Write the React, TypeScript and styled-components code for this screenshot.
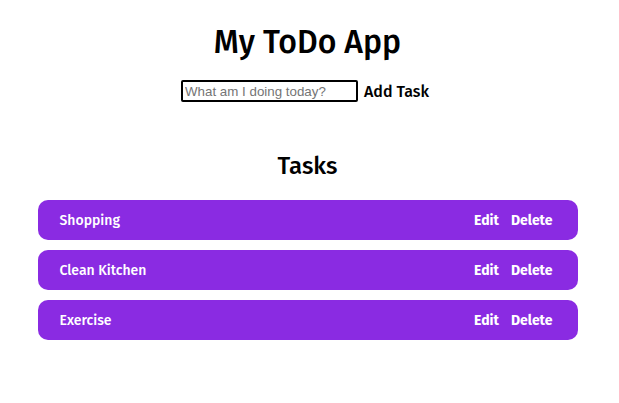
import React from "react";
import styled, { createGlobalStyle } from "styled-components";

const Global = createGlobalStyle`
  body {
    margin: 0;
    font-family: "Fira Sans", Lato, "Noto Sans", sans-serif;
    background: #fff;
    color: #000;
  }
`;

const Page = styled.div`
  display: flex;
  flex-direction: column;
  align-items: center;
  padding: 20px 4px 0 0;
`;

const Title = styled.h1`
  margin: 0;
  font-family: "Fira Sans Medium", "Fira Sans", Lato, sans-serif;
  font-size: 32px;
  font-weight: 500;
  line-height: 44px;
`;

const Form = styled.form`
  display: flex;
  align-items: center;
  gap: 6px;
  margin: 16px 5px 0 0;
`;

const Input = styled.input`
  width: 169px;
  height: 16px;
  padding: 1px 2px;
  border: 2px solid #000;
  border-radius: 2px;
  font-family: "Liberation Sans", Arial, sans-serif;
  font-size: 13.33px;
  &::placeholder {
    color: #757575;
  }
`;

const AddButton = styled.button`
  border: none;
  background: none;
  padding: 0;
  font-family: "Fira Sans Medium", "Fira Sans", Lato, sans-serif;
  font-size: 16px;
  font-weight: 500;
  color: #000;
`;

const Heading = styled.h2`
  margin: 49px 0 0;
  font-family: "Fira Sans Medium", "Fira Sans", Lato, sans-serif;
  font-size: 24px;
  font-weight: 500;
  line-height: 30px;
`;

const List = styled.ul`
  list-style: none;
  margin: 19px 0 0;
  padding: 0;
  width: 540px;
  display: flex;
  flex-direction: column;
  gap: 10px;
`;

const Row = styled.li`
  height: 40px;
  background: #8a2be2;
  border-radius: 10px;
  display: flex;
  align-items: center;
  justify-content: space-between;
  padding: 0 25px 0 22px;
  color: #fff;
  font-family: "Fira Sans Medium", "Fira Sans", Lato, sans-serif;
  font-size: 14px;
  font-weight: 500;
`;

const Actions = styled.div`
  display: flex;
  gap: 12px;
`;

const ActionButton = styled.button`
  border: none;
  background: none;
  padding: 0;
  color: #fff;
  font-family: "Fira Sans", Lato, sans-serif;
  font-size: 14px;
  font-weight: 700;
`;

const tasks = ["Shopping", "Clean Kitchen", "Exercise"];

export default function App() {
  return (
    <>
      <Global />
      <Page>
        <Title>My ToDo App</Title>
        <Form onSubmit={(e) => e.preventDefault()}>
          <Input placeholder="What am I doing today?" />
          <AddButton type="submit">Add Task</AddButton>
        </Form>
        <Heading>Tasks</Heading>
        <List>
          {tasks.map((t) => (
            <Row key={t}>
              <span>{t}</span>
              <Actions>
                <ActionButton>Edit</ActionButton>
                <ActionButton>Delete</ActionButton>
              </Actions>
            </Row>
          ))}
        </List>
      </Page>
    </>
  );
}
